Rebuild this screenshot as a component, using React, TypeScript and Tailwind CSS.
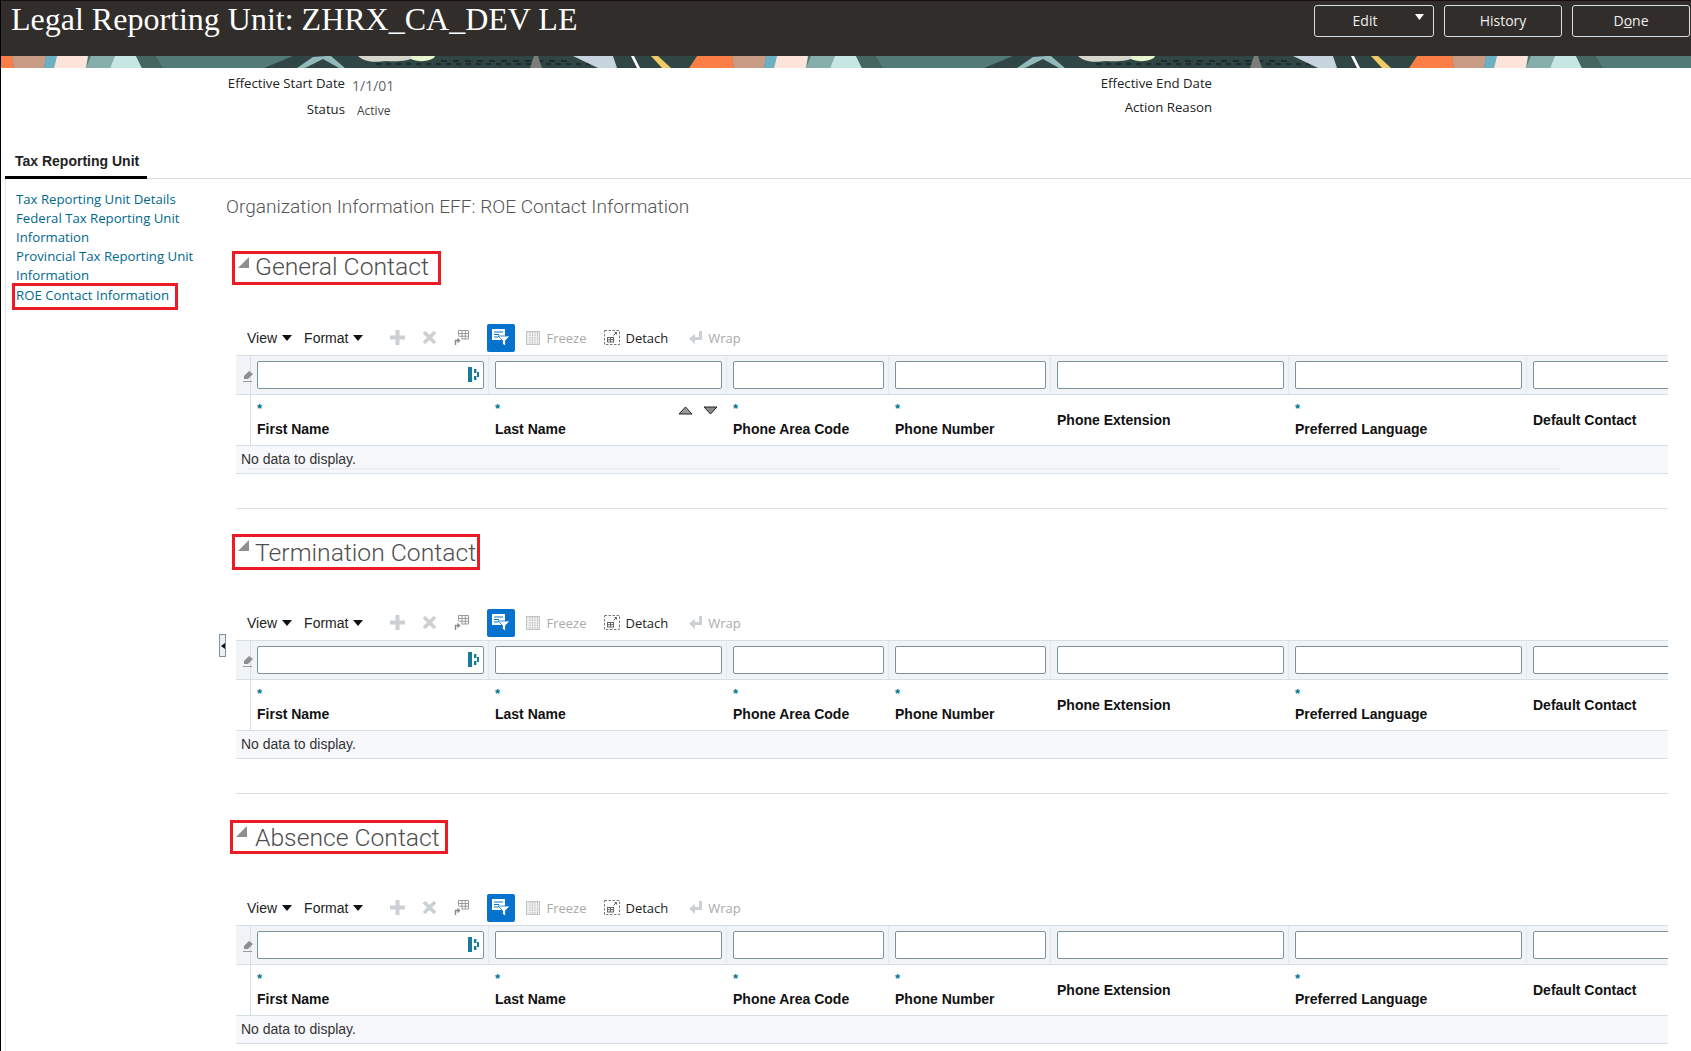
const sans = "font-['Open_Sans',sans-serif]";
const arial = "font-['Liberation_Sans',Arial,sans-serif]";
const light = "font-['Roboto',sans-serif]";

const BannerTile = () => (
  <svg width="720" height="12" viewBox="0 0 720 12" className="shrink-0 block">
    <rect width="720" height="12" fill="#527b78" />
    <polygon points="0,0 11,0 13,12 0,12" fill="#fb7e46" />
    <polygon points="696,0 720,0 720,12 688,12" fill="#fb7e46" />
    <polygon points="11,0 45,0 43,12 13,12" fill="#c89c84" />
    <polygon points="45,0 56,0 53,12 43,12" fill="#6cb1c3" />
    <polygon points="56,0 87,0 85,12 53,12" fill="#fde4da" />
    <polygon points="90,0 114,0 109,12 85,12" fill="#86aeab" />
    <polygon points="114,0 135,0 141,12 109,12" fill="#c6e6e4" />
    <polygon points="135,0 155,0 162,12 141,12" fill="#44665f" />
    <polygon points="292,0 696,0 688,12 263,12" fill="#2f4644" />
    <polygon points="325,0 330,0 344,12 338,12 322,3 304,12 296,12 312,1" fill="#93b9bb" />
    <path d="M357 0 H415 C410 5 395 6 385 5 C372 7 362 5 357 0Z" fill="#d6d6cf" />
    <path d="M410 0 H434 C432 5 418 7 410 3Z" fill="#e7f5cf" />
    <line x1="375" y1="8" x2="590" y2="8" stroke="#111" strokeWidth="1" strokeDasharray="5 5" />
    <line x1="440" y1="5" x2="570" y2="5" stroke="#111" strokeWidth="1" strokeDasharray="6 6" />
    <polygon points="529,12 533,0 537,0 541,12" fill="#7c7c7a" />
    <polygon points="572,0 612,0 616,12 597,12" fill="#c7d4de" />
    <polygon points="630,0 633,0 639,12 636,12" fill="#ffffff" />
    <polygon points="650,0 657,0 670,12 661,12" fill="#f2cb66" />
  </svg>
);

const HeaderButton = ({ label, width }: { label: React.ReactNode; width: string }) => (
  <button className={`relative h-8 ${width} rounded-[3px] border border-[#d6dfe6] text-sm text-[#f0f0f0] ${sans}`}>
    {label}
  </button>
);

const Caret = () => (
  <svg width="10" height="6" viewBox="0 0 10 6" className="ml-[5px]">
    <polygon points="0,0 10,0 5,6" fill="#111" />
  </svg>
);

const PlusIcon = () => (
  <svg width="15" height="15" viewBox="0 0 15 15">
    <path d="M5.5 0h4v5.5H15v4H9.5V15h-4V9.5H0v-4h5.5z" fill="#ccd0d3" />
  </svg>
);

const CrossIcon = () => (
  <svg width="15" height="15" viewBox="0 0 15 15">
    <path d="M2 2l11 11M13 2L2 13" stroke="#ccd0d3" strokeWidth="3.6" />
  </svg>
);

const ColumnsIcon = () => (
  <svg width="16" height="17" viewBox="0 0 16 17" fill="none">
    <path d="M4.5 1.5h10v8.5h-7M4.5 1.5v5M4.5 4.5h10M4.5 7.2h10M8 1.5v8.5M11.3 1.5v8.5" stroke="#9a9a9a" />
    <path d="M1.5 16v-4.5h3M3.5 9.5l2 2-2 2" stroke="#8a8a8a" strokeWidth="1.4" />
  </svg>
);

const FilterIcon = () => (
  <svg width="18" height="17" viewBox="0 0 18 17">
    <path d="M0 0h13v11H0z" fill="#fff" />
    <path d="M2 3h9M2 5.5h5M2 8h4" stroke="#0572ce" strokeWidth="1.2" />
    <polygon points="6,7 18,7 13.5,11.5 13.5,17 10.5,15 10.5,11.5" fill="#fff" stroke="#0572ce" strokeWidth="0.8" />
  </svg>
);

const FreezeIcon = () => (
  <svg width="14" height="14" viewBox="0 0 14 14" fill="none">
    <rect x="0.5" y="0.5" width="13" height="13" fill="#eee" stroke="#c4c4c4" />
    <path d="M4 1v12M6.5 1v12M9 1v12M11.5 1v12" stroke="#bbb" strokeDasharray="1.5 1" />
  </svg>
);

const DetachIcon = () => (
  <svg width="16" height="15" viewBox="0 0 16 15" fill="none">
    <rect x="0.5" y="0.5" width="15" height="14" stroke="#777" strokeDasharray="2.5 1.5" />
    <rect x="3.5" y="7.5" width="6" height="4.5" stroke="#666" />
    <path d="M3.5 9.7h6M6.5 7.5V12" stroke="#666" />
    <path d="M9.5 5.5l3-3M10.5 2.5h2v2" stroke="#666" />
  </svg>
);

const WrapIcon = () => (
  <svg width="13" height="13" viewBox="0 0 13 13">
    <path d="M10 0h3v9H6v4L0 7.5 6 3v3h4z" fill="#ccd0d3" />
  </svg>
);

const ClearIcon = () => (
  <svg width="10" height="13" viewBox="0 0 10 13" className="-mr-[3px] shrink-0">
    <polygon points="6,1 10,4 5,9 1,9 1,6" fill="#8f8f8f" />
    <rect x="0" y="11" width="9" height="1" fill="#9a9a9a" />
  </svg>
);

const LovIcon = () => (
  <svg width="11" height="15" viewBox="0 0 11 15">
    <rect x="0" y="0" width="4" height="15" fill="#187a99" />
    <rect x="6" y="2" width="2.4" height="4" fill="#187a99" />
    <rect x="6" y="9" width="2.4" height="4" fill="#187a99" />
    <rect x="9" y="5" width="2" height="5" fill="#187a99" />
  </svg>
);

const columns = [
  { label: 'First Name', required: true },
  { label: 'Last Name', required: true },
  { label: 'Phone Area Code', required: true },
  { label: 'Phone Number', required: true },
  { label: 'Phone Extension', required: false },
  { label: 'Preferred Language', required: true },
  { label: 'Default Contact', required: false },
];

const gridCols = 'grid grid-cols-[15px_238px_238px_162px_162px_238px_238px_141px]';

const Section = ({
  title,
  topClass,
  boxClass,
  titleClass,
  sortArrows,
  scrollbar,
}: {
  title: string;
  topClass: string;
  boxClass: string;
  titleClass: string;
  sortArrows?: boolean;
  scrollbar?: boolean;
}) => (
  <section className="h-[285px]">
    <div className={`h-[85px] ${topClass}`}>
      <div className={`flex border-[3px] border-[#ed1c24] ${boxClass}`}>
        <svg width="11" height="11" viewBox="0 0 11 11" className="mt-[3px] ml-[3px] shrink-0">
          <polygon points="11,0 11,11 0,11" fill="#8f8f8f" />
        </svg>
        <h2 className={`text-[24.7px] leading-[25px] font-light text-[#4f4f4f] whitespace-nowrap ${light} ${titleClass}`}>{title}</h2>
      </div>
    </div>

    <div className={`flex items-center h-[29px] mb-[3px] text-sm ${arial}`}>
      <span className="ml-[11px] text-[#222]">View</span>
      <Caret />
      <span className="ml-3 text-[#222]">Format</span>
      <Caret />
      <span className="ml-[27px] flex"><PlusIcon /></span>
      <span className="ml-[17px] flex"><CrossIcon /></span>
      <span className="ml-[17px] flex"><ColumnsIcon /></span>
      <span className="ml-[17px] w-7 h-7 rounded-[2px] bg-[#0572ce] flex items-center justify-center"><FilterIcon /></span>
      <span className="ml-[11px] flex"><FreezeIcon /></span>
      <span className={`ml-[6px] mt-[2px] text-[13px] text-[#a9a9a9] ${sans}`}>Freeze</span>
      <span className="ml-[18px] flex"><DetachIcon /></span>
      <span className={`ml-[5px] mt-[2px] text-[13px] text-[#222] ${sans}`}>Detach</span>
      <span className="ml-[21px] flex"><WrapIcon /></span>
      <span className={`ml-[6px] mt-[2px] text-[13px] text-[#a9a9a9] ${sans}`}>Wrap</span>
    </div>

    <div className={`w-[1432px] overflow-hidden ${arial}`}>
      <div className={`${gridCols} h-10 bg-[#f1f4f7] border-y border-[#d6dfe6]`}>
        <div className="flex items-center justify-end pt-[3px] border-r border-[#d6dfe6]"><ClearIcon /></div>
        {columns.map((col, i) => (
          <div key={col.label} className={`flex items-center pl-[6px] pr-[4px] ${i < 6 ? 'border-r border-[#e3e8ed]' : 'w-[180px]'}`}>
            <div className="relative w-full">
              <input className="block w-full h-7 bg-white border border-[#7d919e] rounded-[2px]" />
              {i === 0 && <span className="absolute right-[5px] top-[6px] flex"><LovIcon /></span>}
            </div>
          </div>
        ))}
      </div>

      <div className={`${gridCols} h-[51px] border-b border-[#d6dfe6]`}>
        <div className="border-r border-[#d6dfe6]" />
        {columns.map((col, i) => (
          <div key={col.label} className="relative pl-[6px] text-sm font-bold text-[#111] whitespace-nowrap">
            {col.required ? (
              <>
                <div className="h-[17px] pt-[8px] text-[13px] leading-[12px] text-[#00758f]">*</div>
                <div className="mt-[8px] leading-[18px]">{col.label}</div>
              </>
            ) : (
              <div className="pt-[16px] leading-[18px]">{col.label}</div>
            )}
            {sortArrows && i === 1 && (
              <div className="absolute right-[9px] top-[11px] flex gap-[10px]">
                <svg width="15" height="9" viewBox="0 0 15 9">
                  <polygon points="7.5,1 14,8 1,8" fill="#9b9b9b" stroke="#222" />
                </svg>
                <svg width="15" height="9" viewBox="0 0 15 9">
                  <polygon points="1,1 14,1 7.5,8" fill="#8a8a8a" stroke="#222" />
                </svg>
              </div>
            )}
          </div>
        ))}
      </div>

      <div className="relative h-[28px] bg-[#f7f8fb] border-b border-[#d6dfe6] pl-[5px] text-sm leading-[27px] text-[#333]">
        No data to display.
        {scrollbar && <div className="absolute left-3 bottom-[3px] w-[1312px] h-[2px] bg-[#eeeeee]" />}
      </div>
    </div>

    <div className="mt-[34px] w-[1432px] border-t border-[#d6dfe6]" />
  </section>
);

const links = [
  'Tax Reporting Unit Details',
  'Federal Tax Reporting Unit Information',
  'Provincial Tax Reporting Unit Information',
];

export default function App() {
  return (
    <div className={`relative w-[1691px] h-[1051px] overflow-hidden bg-white border-l border-black ${sans}`}>
      <header className="h-14 bg-[#302d2a] flex justify-between border-t border-[#1a0f10]">
        <h1 className="pl-[10px] text-[32px] leading-[36px] text-white font-['Liberation_Serif',serif] whitespace-nowrap">
          Legal Reporting Unit: ZHRX_CA_DEV LE
        </h1>
        <div className="flex gap-[10px] pt-1 pr-[1px]">
          <button className={`relative h-8 w-[120px] rounded-[3px] border border-[#d6dfe6] text-sm text-[#f0f0f0] pr-[18px] ${sans}`}>
            Edit
            <svg width="9" height="6" viewBox="0 0 9 6" className="absolute right-[9px] top-[8px]">
              <polygon points="0,0 9,0 4.5,6" fill="#fff" />
            </svg>
          </button>
          <HeaderButton label="History" width="w-[118px]" />
          <HeaderButton label={<>D<span className="underline">o</span>ne</>} width="w-[118px]" />
        </div>
      </header>
      <div className="h-3 flex overflow-hidden">
        <BannerTile />
        <BannerTile />
        <BannerTile />
      </div>

      <div className="flex h-[78px] text-[13.2px] text-[#222]">
        <div className="w-[889px]">
          <div className="flex items-center h-[29px] pt-[2px]">
            <span className="w-[344px] text-right">Effective Start Date</span>
            <span className="ml-[7px] mt-[4px] text-sm text-[#666]">1/1/01</span>
          </div>
          <div className="flex items-center h-[26px]">
            <span className="w-[344px] text-right">Status</span>
            <span className="ml-3 mt-[2px] text-xs text-[#444]">Active</span>
          </div>
        </div>
        <div>
          <div className="flex items-center h-[29px] pt-[2px]">
            <span className="w-[322px] text-right">Effective End Date</span>
          </div>
          <div className="flex items-center h-[21px]">
            <span className="w-[322px] text-right">Action Reason</span>
          </div>
        </div>
      </div>

      <div className="ml-1 h-[33px] border-b border-[#d6dfe6] flex">
        <div className={`w-[142px] h-[33px] pl-[10px] border-b-[3px] border-black text-sm font-bold leading-[30px] text-[#222] ${arial}`}>
          Tax Reporting Unit
        </div>
      </div>

      <div className="ml-1 flex border-l border-[#e3e8ed]">
        <nav className="w-[220px] shrink-0 pt-[11px] pl-[10px] pr-[30px] text-[13.2px] leading-[19px] text-[#00688c]">
          {links.map((link) => (
            <a key={link} className="block">{link}</a>
          ))}
          <a className="block -ml-[4px] -mt-[2px] w-[166px] h-[27px] pl-[1px] border-[3px] border-[#ed1c24] leading-[19px] whitespace-nowrap">
            ROE Contact Information
          </a>
        </nav>
        <main className="pl-[10px]">
          <h2 className={`h-[59px] -ml-[10px] pt-[15px] text-[19.1px] leading-[26px] font-light text-[#555] whitespace-nowrap ${light}`}>
            Organization Information EFF: ROE Contact Information
          </h2>
          <Section title="General Contact" topClass="pt-[13px]" boxClass="-ml-[4px] w-[209px] h-[34px]" titleClass="ml-[6px]" sortArrows scrollbar />
          <Section title="Termination Contact" topClass="pt-[11px]" boxClass="-ml-[4px] w-[248px] h-[36px]" titleClass="ml-[6px] pt-[3px]" />
          <Section title="Absence Contact" topClass="pt-[12px]" boxClass="-ml-[6px] w-[218px] h-[34px]" titleClass="ml-[8px] pt-[2px]" />
        </main>
      </div>

      <div className="absolute left-[218px] top-[634px] w-[7px] h-[23px] bg-[#eef1f4] border border-[#7d919e] flex items-center justify-center">
        <svg width="4" height="6" viewBox="0 0 4 6">
          <polygon points="4,0 4,6 0,3" fill="#111" />
        </svg>
      </div>
    </div>
  );
}
